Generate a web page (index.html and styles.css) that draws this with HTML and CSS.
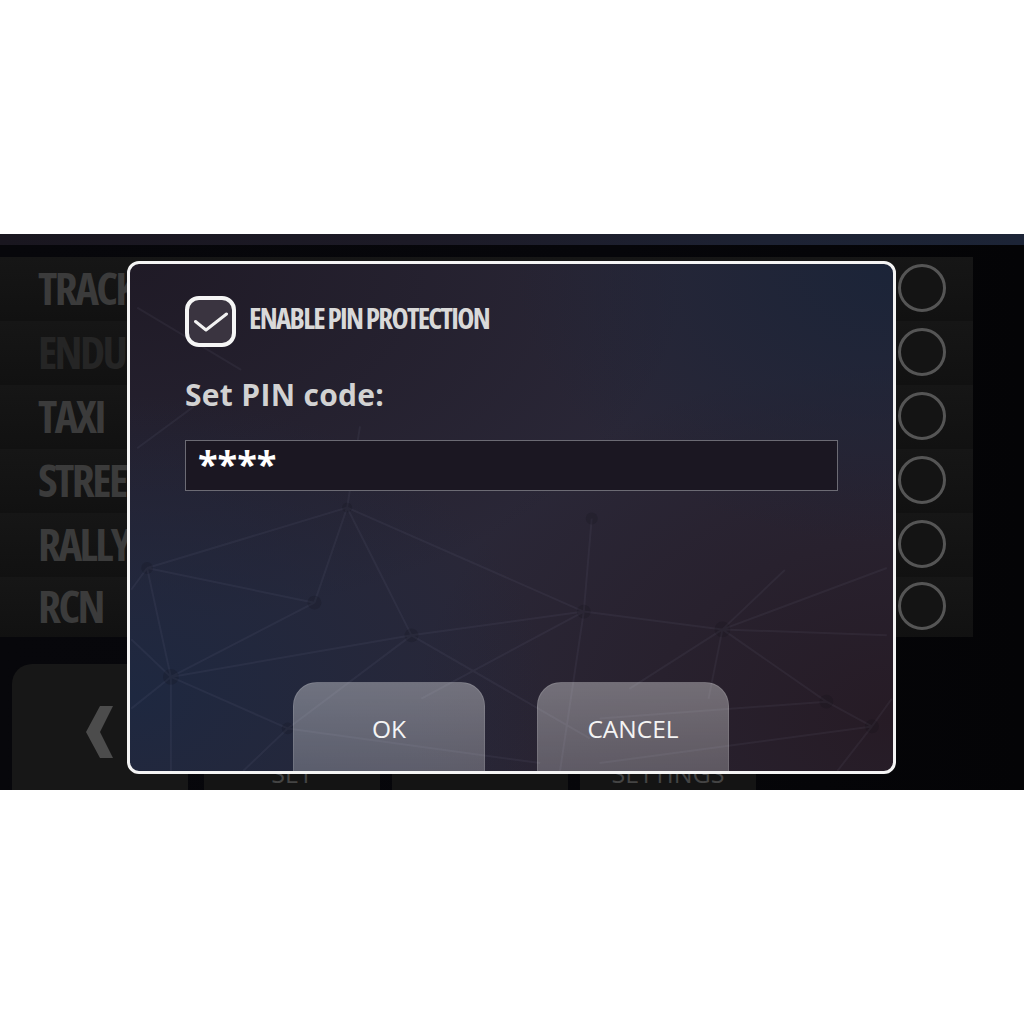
FILE: index.html
```html
<!DOCTYPE html>
<html lang="en">
<head>
<meta charset="utf-8">
<title>PIN protection</title>
<link rel="stylesheet" href="styles.css">
</head>
<body>
<div class="screen">
  <div class="topbar"></div>
  <div class="modes">
    <div class="mode"><span class="mode-name">TRACK</span><span class="radio"></span></div>
    <div class="mode"><span class="mode-name dim">ENDURANCE</span><span class="radio"></span></div>
    <div class="mode"><span class="mode-name">TAXI</span><span class="radio"></span></div>
    <div class="mode"><span class="mode-name">STREET</span><span class="radio"></span></div>
    <div class="mode"><span class="mode-name">RALLY</span><span class="radio"></span></div>
    <div class="mode short"><span class="mode-name">RCN</span><span class="radio"></span></div>
  </div>
  <div class="nav">
    <div class="nav-btn back">
      <svg class="chevron" viewBox="0 0 27 52" aria-hidden="true"><path d="M14 0H27L14 26L27 52H14L0 26Z"/></svg>
    </div>
    <div class="nav-btn"><span class="nav-label">SET</span></div>
    <div class="nav-btn"></div>
    <div class="nav-btn"><span class="nav-label">SETTINGS</span></div>
  </div>

  <div class="dialog">
    <svg class="web" viewBox="127 261 768 512" aria-hidden="true">
      <g class="web-lines">
        <path d="M133 305L238 368M133 447L190 405M358 425L345 507M345 507L143 568M345 507L312 603M345 507L410 636M345 507L584 612M143 568L312 603M143 568L167 678M143 568L127 590M312 603L167 678M167 678L410 636M167 678L127 640M167 678L127 710M167 678L167 773M167 678L285 730M410 636L584 612M410 636L285 730M410 636L590 740M285 730L240 773M285 730L540 765M592 518L584 612M584 612L724 630M584 612L560 773M584 612L420 700M724 630L787 570M724 630L890 568M724 630L890 636M724 630L710 700M724 630L829 703M724 630L630 690M829 703L875 728M829 703L600 720M875 728L600 765M875 728L840 773M875 728L895 700"/>
      </g>
      <g class="web-nodes">
        <circle cx="345" cy="507" r="5"/><circle cx="143" cy="568" r="6"/><circle cx="312" cy="603" r="7"/>
        <circle cx="410" cy="636" r="7"/><circle cx="167" cy="678" r="8"/><circle cx="584" cy="612" r="7"/>
        <circle cx="724" cy="630" r="8"/><circle cx="829" cy="703" r="7"/><circle cx="875" cy="728" r="7"/>
        <circle cx="592" cy="518" r="6"/><circle cx="285" cy="730" r="6"/>
      </g>
    </svg>
    <div class="dialog-body">
      <div class="check-row">
        <span class="checkbox">
          <svg class="check-icon" viewBox="0 0 34 20" aria-hidden="true"><path d="M1.5 9.5L12 18L32.5 2"/></svg>
        </span>
        <span class="check-label">ENABLE PIN PROTECTION</span>
      </div>
      <div class="pin-label">Set PIN code:</div>
      <div class="pin-input">****</div>
      <div class="actions">
        <div class="action">OK</div>
        <div class="action">CANCEL</div>
      </div>
    </div>
  </div>
</div>
</body>
</html>
```
FILE: styles.css
```css
* { box-sizing: border-box; }
html, body { margin: 0; padding: 0; background: #fff; }
body { height: 1024px; padding-top: 234px; overflow: hidden; }

.screen {
  position: relative;
  height: 556px;
  overflow: hidden;
  background: linear-gradient(90deg, #07070b 0%, #06060a 60%, #040406 100%);
}
.topbar {
  height: 11px;
  background: linear-gradient(90deg, #19161f 0%, #1c1a26 40%, #1d2233 75%, #1c2436 100%);
}
.modes { margin-top: 12px; width: 973px; }
.mode {
  height: 64px;
  padding: 0 27px 0 38px;
  display: flex;
  align-items: center;
  justify-content: space-between;
  background: linear-gradient(180deg, #161616 0%, #111 100%);
}
.mode.short { height: 60px; }
.mode-name {
  margin-top: -4px;
  font-family: "Open Sans", sans-serif;
  font-stretch: 75%;
  font-weight: 700;
  font-size: 45px;
  letter-spacing: -2.6px;
  color: #3b3b3b;
}
.mode-name.dim { color: #252525; }
.radio {
  width: 48px;
  height: 48px;
  margin-top: -2px;
  border-radius: 50%;
  border: 3px solid #555;
  background: #141414;
}
.nav { margin-top: 27px; padding-left: 12px; display: flex; gap: 12px; }
.nav-btn {
  width: 176px;
  height: 126px;
  display: flex;
  align-items: flex-end;
  justify-content: center;
  background: #141414;
}
.nav-btn.back {
  margin-right: 4px;
  align-items: center;
  justify-content: flex-start;
  padding: 10px 0 0 74px;
  border-radius: 20px 20px 0 0;
  background: #171717;
}
.chevron { width: 27px; height: 52px; fill: #4c4c4c; }
.nav-label {
  font-family: "Open Sans", sans-serif;
  font-size: 25px;
  line-height: 34px;
  color: #444;
}

.dialog {
  position: absolute;
  left: 127px;
  top: 27px;
  width: 769px;
  height: 513px;
  border: 3px solid #f4f4f4;
  border-radius: 12px;
  overflow: hidden;
  background:
    radial-gradient(ellipse 380px 280px at 100% 0%, #1b2438 0%, rgba(27,36,56,0) 100%),
    radial-gradient(ellipse 420px 300px at 0% 85%, #1e2840 0%, rgba(30,40,64,0) 100%),
    radial-gradient(ellipse 560px 360px at 0% 0%, #1f1a26 0%, rgba(31,26,38,0) 100%),
    radial-gradient(ellipse 480px 360px at 100% 90%, #261b25 0%, rgba(38,27,37,0) 100%),
    #2a2737;
}
.web { position: absolute; inset: 0; width: 100%; height: 100%; }
.web-lines path { fill: none; stroke: rgba(190,190,215,.06); stroke-width: 2; }
.web-nodes circle { fill: rgba(10,10,20,.16); }
.dialog-body {
  position: relative;
  padding: 32px 0 0 55px;
  display: flex;
  flex-direction: column;
}
.check-row { display: flex; align-items: center; gap: 13px; }
.checkbox {
  width: 51px;
  height: 51px;
  border: 4px solid #f6f6f6;
  border-radius: 14px;
  background: #3a3440;
  display: flex;
  align-items: center;
  justify-content: center;
}
.check-icon { width: 34px; height: 20px; }
.check-icon path { fill: none; stroke: #f2f2f2; stroke-width: 3; stroke-linecap: round; stroke-linejoin: round; }
.check-label {
  font-family: "Open Sans", sans-serif;
  font-stretch: 75%;
  font-weight: 700;
  font-size: 29px;
  letter-spacing: -1.7px;
  color: #d9d9d9;
  margin-top: -9px;
}
.pin-label {
  margin-top: 28px;
  font-family: "Open Sans", sans-serif;
  font-weight: 700;
  font-size: 30px;
  line-height: 40px;
  letter-spacing: .3px;
  color: #d2d2d2;
}
.pin-input {
  margin-top: 25px;
  width: 653px;
  height: 51px;
  padding-left: 12px;
  border: 1px solid #6c6b74;
  background: #1b1722;
  font-family: "Open Sans", sans-serif;
  font-weight: 700;
  font-size: 36px;
  line-height: 46px;
  color: #fff;
}
.actions {
  margin: 191px 0 0 108px;
  display: flex;
  gap: 52px;
}
.action {
  width: 192px;
  height: 92px;
  display: flex;
  align-items: center;
  justify-content: center;
  border: 1px solid rgba(255,255,255,.12);
  border-radius: 24px 24px 0 0;
  background: linear-gradient(180deg, rgba(255,255,255,.35) 0%, rgba(255,255,255,.25) 100%);
  font-family: "Open Sans", sans-serif;
  font-size: 24.5px;
  color: #f4f4f4;
}
```
